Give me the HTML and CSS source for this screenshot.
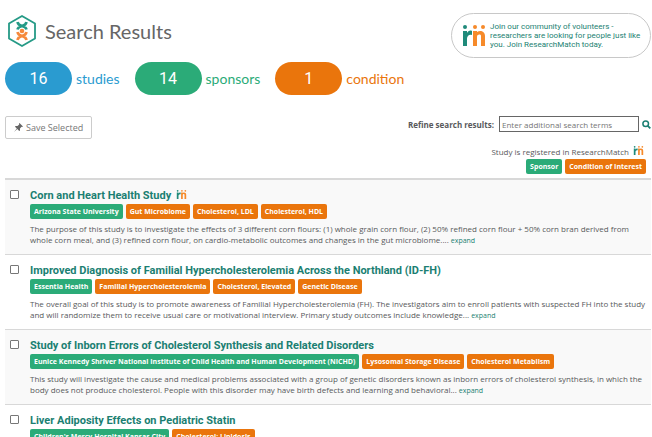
FILE: index.html
```html
<!DOCTYPE html>
<html lang="en">
<head>
  <meta charset="UTF-8">
  <meta name="viewport" content="width=device-width, initial-scale=1">
  <title>Search Results</title>
  <link rel="stylesheet" href="styles.css">
</head>
<body>

  <!-- shared icons -->
  <svg class="sprite" aria-hidden="true">
    <symbol id="rm-logo" viewBox="0 0 24 21">
      <g fill="#1f8a7a">
        <circle cx="3" cy="2" r="2"/>
        <path d="M1 6h4v2c1-2 3-3 5-2v4c-3-1-5 1-5 4v7H1z"/>
      </g>
      <g fill="#f68a2a">
        <circle cx="13" cy="2" r="2"/>
        <circle cx="21" cy="2" r="2"/>
        <path d="M11 6h4v1c3-2 8-1 8 4v10h-4V11c0-2-4-2-4 1v9h-4z"/>
      </g>
    </symbol>
  </svg>

  <header class="page-header">
    <div class="brand">
      <svg class="hex-logo" viewBox="0 0 28 32" aria-hidden="true">
        <path d="M14 1 27 8.500V23.500L14 31 1 23.500V8.500z" fill="none" stroke="#259a86" stroke-width="1.800" stroke-linejoin="round"/>
        <path d="M9.500 7c.5 3 2.500 3.500 4.500 4s4 1 4.500 3.500M18.500 7c-.5 3-2.500 3.500-4.500 4s-4 1-4.500 3.500" fill="none" stroke="#259a86" stroke-width="2.600"/>
        <circle cx="14" cy="16" r="2.300" fill="#f6893b"/>
        <path d="M9.500 17c.5 3 2.500 3.500 4.500 4s4 1 4.500 4M18.500 17c-.5 3-2.500 3.500-4.500 4s-4 1-4.500 4" fill="none" stroke="#f6893b" stroke-width="2.600"/>
      </svg>
      <h1>Search Results</h1>
    </div>
    <a class="join" href="#">
      <svg class="join-logo"><use href="#rm-logo"/></svg>
      <span>Join our community of volunteers - researchers are looking for people just like you. Join ResearchMatch today.</span>
    </a>
  </header>

  <section class="counts">
    <div class="count studies"><span class="pill">16</span>studies</div>
    <div class="count sponsors"><span class="pill">14</span>sponsors</div>
    <div class="count conditions"><span class="pill">1</span>condition</div>
  </section>

  <section class="toolbar">
    <button class="save-btn" type="button">
      <svg viewBox="0 0 9 9" aria-hidden="true"><path d="M5.500 0 9 3.500 8 4 7.500 3.800 6 5.500 6 7.500 5.200 8 3.300 6.100 0 9 2.800 5.600 1 3.800 1.500 3 3.500 3 5.200 1.500 5 .5z" fill="#666"/></svg>
      Save Selected
    </button>
    <form class="refine">
      <label for="refine">Refine search results:</label>
      <input type="text" id="refine" placeholder="Enter additional search terms">
      <button class="search-btn" type="submit" aria-label="Search">
        <svg viewBox="0 0 9 9"><circle cx="3.700" cy="3.700" r="2.800" fill="none" stroke="#1b7f72" stroke-width="1.500"/><path d="M5.800 5.800 8.300 8.300" stroke="#1b7f72" stroke-width="1.800"/></svg>
      </button>
    </form>
  </section>

  <section class="legend">
    <div class="registered">Study is registered in ResearchMatch <svg class="rm-icon"><use href="#rm-logo"/></svg></div>
    <div class="badges">
      <span class="badge sponsor">Sponsor</span>
      <span class="badge">Condition of Interest</span>
    </div>
  </section>

  <main class="results">
    <article class="study">
      <input type="checkbox" id="study1">
      <div class="info">
        <h2><label for="study1">Corn and Heart Health Study</label> <svg class="rm-icon"><use href="#rm-logo"/></svg></h2>
        <div class="badges">
          <span class="badge sponsor">Arizona State University</span>
          <span class="badge">Gut Microbiome</span>
          <span class="badge">Cholesterol, LDL</span>
          <span class="badge">Cholesterol, HDL</span>
        </div>
        <p>The purpose of this study is to investigate the effects of 3 different corn flours: (1) whole grain corn flour, (2) 50% refined corn flour + 50% corn bran derived from whole corn meal, and (3) refined corn flour, on cardio-metabolic outcomes and changes in the gut microbiome.... <a href="#">expand</a></p>
      </div>
    </article>

    <article class="study">
      <input type="checkbox" id="study2">
      <div class="info">
        <h2><label for="study2">Improved Diagnosis of Familial Hypercholesterolemia Across the Northland (ID-FH)</label></h2>
        <div class="badges">
          <span class="badge sponsor">Essentia Health</span>
          <span class="badge">Familial Hypercholesterolemia</span>
          <span class="badge">Cholesterol, Elevated</span>
          <span class="badge">Genetic Disease</span>
        </div>
        <p>The overall goal of this study is to promote awareness of Familial Hypercholesterolemia (FH). The investigators aim to enroll patients with suspected FH into the study and will randomize them to receive usual care or motivational interview. Primary study outcomes include knowledge... <a href="#">expand</a></p>
      </div>
    </article>

    <article class="study">
      <input type="checkbox" id="study3">
      <div class="info">
        <h2><label for="study3">Study of Inborn Errors of Cholesterol Synthesis and Related Disorders</label></h2>
        <div class="badges">
          <span class="badge sponsor">Eunice Kennedy Shriver National Institute of Child Health and Human Development (NICHD)</span>
          <span class="badge">Lysosomal Storage Disease</span>
          <span class="badge">Cholesterol Metablism</span>
        </div>
        <p>This study will investigate the cause and medical problems associated with a group of genetic disorders known as inborn errors of cholesterol synthesis, in which the body does not produce cholesterol. People with this disorder may have birth defects and learning and behavioral... <a href="#">expand</a></p>
      </div>
    </article>

    <article class="study">
      <input type="checkbox" id="study4">
      <div class="info">
        <h2><label for="study4">Liver Adiposity Effects on Pediatric Statin</label></h2>
        <div class="badges">
          <span class="badge sponsor">Children's Mercy Hospital Kansas City</span>
          <span class="badge">Cholesterol; Lipidosis</span>
        </div>
      </div>
    </article>
  </main>

</body>
</html>
```
FILE: styles.css
```css
* { box-sizing: border-box; margin: 0; padding: 0; }

body {
  padding: 13px 1px 0 5px;
  font-family: "Open Sans", "Liberation Sans", sans-serif;
  font-size: 8px;
  line-height: 11px;
  color: #58595b;
  background: #fff;
}
a { color: #1b7f72; text-decoration: none; }
.sprite { display: none; }

/* header */
.page-header { display: flex; justify-content: space-between; }
.brand { display: flex; align-items: center; gap: 9px; padding: 0 3px 10px; }
.hex-logo { width: 28px; height: 32px; }
.brand h1 { font-family: Lato, sans-serif; font-size: 20px; line-height: 24px; font-weight: 400; color: #666; }
.join {
  display: flex; align-items: center; gap: 4px;
  width: 200px; height: 45px; padding: 0 6px 0 10px;
  border: 1px solid #c8c8c8; border-radius: 23px;
  font-family: Roboto, sans-serif; line-height: 9px;
}
.join-logo { flex: none; width: 24px; height: 21px; }

/* counters */
.counts { display: flex; gap: 15px; margin-top: 4px; }
.count {
  display: flex; align-items: center; gap: 4px;
  font-family: Lato, sans-serif; font-size: 14px; line-height: 16px;
}
.pill {
  width: 67px; border-radius: 17px;
  font-family: Roboto, sans-serif;
  font-size: 16px; line-height: 33px; text-align: center; color: #fff;
}
.studies { color: #2a9bd0; }
.studies .pill { background: #2a9bd0; }
.sponsors { color: #2bab78; }
.sponsors .pill { background: #2bab78; }
.conditions { color: #ea750c; }
.conditions .pill { background: #ea750c; }

/* toolbar */
.toolbar { display: flex; justify-content: space-between; align-items: flex-start; margin-top: 21px; }
.save-btn {
  display: flex; align-items: center; gap: 3px;
  height: 23px; padding: 0 8px;
  border: 1px solid #ccc; border-radius: 2px; background: #fff;
  font-family: inherit; font-size: 9px; color: #777; cursor: pointer;
}
.save-btn svg { width: 9px; height: 9px; }
.refine { display: flex; align-items: center; gap: 5px; }
.refine label { font-weight: 700; }
.refine input {
  width: 140px; height: 16px; padding: 0 2px;
  border: 1px solid #666; font-family: inherit; font-size: 8px; color: #555;
}
.refine input::placeholder { color: #757575; }
.search-btn { display: flex; margin-left: -2px; border: none; background: none; cursor: pointer; }
.search-btn svg { width: 9px; height: 9px; }

/* legend */
.legend { display: flex; flex-direction: column; align-items: flex-end; gap: 2px; padding: 7px 5px 4px 0; }
.rm-icon { width: 11px; height: 9px; margin-left: 2px; }
.registered { padding-right: 2px; }

/* badges */
.badges { display: flex; gap: 3px; }
.badge {
  padding: 0 4px; border-radius: 2px;
  background: #ea750c; color: #fff;
  font-size: 7px; line-height: 15px; font-weight: 700; white-space: nowrap;
}
.badge.sponsor { background: #2bab78; }

/* results */
.results { border-top: 2px solid #d8d8d8; }
.study {
  display: flex; gap: 11px;
  padding: 8px 5px 9px;
  border-bottom: 1px solid #d8d8d8;
}
.study:nth-child(odd) { background: #f9f9f9; }
.study input {
  flex: none; appearance: none;
  width: 9px; height: 9px; margin-top: 2px;
  border: 1px solid #777; border-radius: 1px; background: #fff;
}
.study h2 { font-family: Roboto, sans-serif; font-size: 11px; line-height: 16px; font-weight: 700; color: #1b7f72; }
.study p { margin-top: 4px; }
.study p a { font-size: 7px; line-height: 7px; }
```
